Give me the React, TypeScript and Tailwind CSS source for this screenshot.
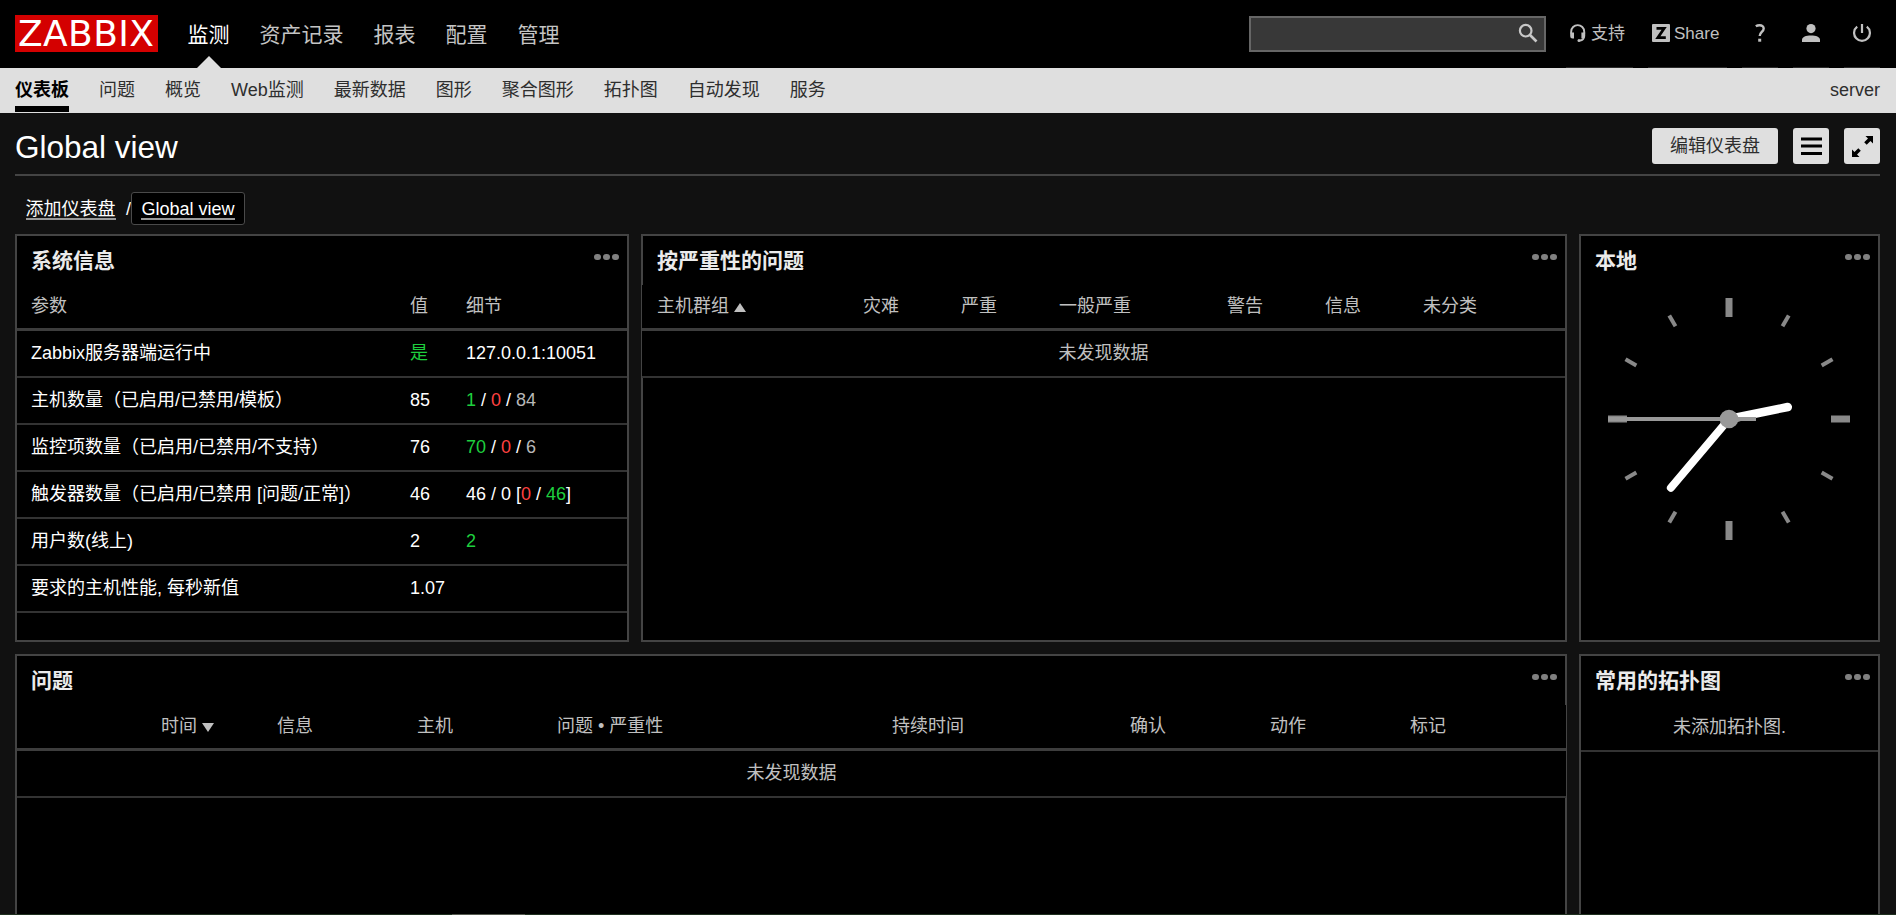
import React from "react";

const FONT = "font-['Liberation_Sans','Noto_Sans_CJK_SC',sans-serif]";

const mainMenu = ["监测", "资产记录", "报表", "配置", "管理"];
const subMenu = ["仪表板", "问题", "概览", "Web监测", "最新数据", "图形", "聚合图形", "拓扑图", "自动发现", "服务"];

const Green: React.FC<{ children: React.ReactNode }> = ({ children }) => <span className="text-[#1ecf3e]">{children}</span>;
const Red: React.FC<{ children: React.ReactNode }> = ({ children }) => <span className="text-[#ff4040]">{children}</span>;
const Grey: React.FC<{ children: React.ReactNode }> = ({ children }) => <span className="text-[#b8b8b8]">{children}</span>;

const systemRows: { name: string; value: React.ReactNode; details?: React.ReactNode }[] = [
  { name: "Zabbix服务器端运行中", value: <Green>是</Green>, details: "127.0.0.1:10051" },
  { name: "主机数量（已启用/已禁用/模板）", value: "85", details: <><Green>1</Green> / <Red>0</Red> / <Grey>84</Grey></> },
  { name: "监控项数量（已启用/已禁用/不支持）", value: "76", details: <><Green>70</Green> / <Red>0</Red> / <Grey>6</Grey></> },
  { name: "触发器数量（已启用/已禁用 [问题/正常]）", value: "46", details: <>46 / 0 [<Red>0</Red> / <Green>46</Green>]</> },
  { name: "用户数(线上)", value: "2", details: <Green>2</Green> },
  { name: "要求的主机性能, 每秒新值", value: "1.07" },
];

interface WidgetProps {
  title: string;
  className?: string;
  children: React.ReactNode;
}

const Widget: React.FC<WidgetProps> = ({ title, className = "", children }) => (
  <section className={`border-2 border-[#444] bg-black min-w-0 ${className}`}>
    <div className="flex justify-between h-[49px] pl-[14px] pr-[8.5px] pt-[9px]">
      <h4 className="text-[21px] leading-8 font-bold text-[#ebebeb]">{title}</h4>
      <button className="flex gap-[2.5px] pt-[8.5px] items-start">
        <span className="size-[6.5px] rounded-full bg-[#808080]" />
        <span className="size-[6.5px] rounded-full bg-[#808080]" />
        <span className="size-[6.5px] rounded-full bg-[#808080]" />
      </button>
    </div>
    {children}
  </section>
);

const Clock: React.FC = () => (
  <svg className="w-[242px] h-[242px] ml-[27px] mt-[13px] block" viewBox="-121 -121 242 242">
    {[...Array(12)].map((_, i) => (
      <line
        key={i}
        x1="0"
        x2="0"
        y1={i % 3 ? -119.5 : -121}
        y2={i % 3 ? -107 : -102}
        stroke="#898989"
        strokeWidth={i % 3 ? 4 : 7}
        transform={`rotate(${i * 30})`}
      />
    ))}
    <line x1="0" y1="0" x2="0" y2="-60" stroke="#fff" strokeWidth="8.5" strokeLinecap="round" transform="rotate(78.5)" />
    <line x1="0" y1="0" x2="0" y2="-90" stroke="#fff" strokeWidth="8" strokeLinecap="round" transform="rotate(220.2)" />
    <line x1="27" y1="0" x2="-121" y2="0" stroke="#999" strokeWidth="4" />
    <circle r="9.3" fill="#999" />
  </svg>
);

const App: React.FC = () => (
  <div className={`${FONT} h-[915px] overflow-hidden bg-[#111] text-white text-[18px] leading-[27px] relative`}>
    {/* Top bar */}
    <header className="h-[68px] bg-black flex items-start pl-[15px] pr-4">
      <div className="mt-[15px] w-[143px] h-[37px] bg-[#d40000] pl-[3px] text-white text-[36px] leading-[37px] tracking-[0.4px] font-['DejaVu_Sans',sans-serif]">
        ZABBIX
      </div>
      <nav className="flex ml-[14.5px] text-[21px]">
        {mainMenu.map((item, i) => (
          <a key={item} className={`relative block h-[68px] px-[15px] leading-[70px] ${i === 0 ? "text-white" : "text-[#c4c4c4]"}`}>
            {item}
            {i === 0 && (
              <span className="absolute bottom-0 left-1/2 -translate-x-1/2 border-x-[12.5px] border-x-transparent border-b-[12px] border-b-[#dfdfdf]" />
            )}
          </a>
        ))}
      </nav>
      <div className="ml-auto mt-4 w-[297px] h-9 border-2 border-[#666] bg-[#383838] flex justify-end pr-[6px] pt-[5px]">
        <svg width="20" height="20" viewBox="0 0 20 20" fill="none" stroke="#c8c8c8">
          <circle cx="7.7" cy="7.7" r="5.8" strokeWidth="2.2" />
          <path d="M12 12l6.500 6.500" strokeWidth="2.700" />
        </svg>
      </div>
      <div className="flex ml-5 gap-[15px] text-[17px] leading-5 text-[#c0c0c0]">
        <a className="h-[68px] w-[67px] border-b border-[#2c2c2c] pl-[3px] pt-6 flex">
          <svg className="mr-1" width="18" height="18" viewBox="0 0 18 18" fill="none" stroke="#c0c0c0">
            <path d="M2.200 9.500V7.600a6.500 6.500 0 0 1 13 0v1.900M14.800 13c0 2-1.300 3.100-3.800 3.500" strokeWidth="1.900" />
            <path d="M1.200 8.500h3.800v6H3.500a2.300 2.300 0 0 1-2.300-2.300zM12.400 8.500h3.800v3.700a2.300 2.300 0 0 1-2.300 2.300h-1.500z" fill="#c0c0c0" stroke="none" />
            <circle cx="10" cy="16.500" r="1.500" fill="#c0c0c0" stroke="none" />
          </svg>
          支持
        </a>
        <a className="h-[68px] w-[79px] border-b border-[#2c2c2c] pl-1 pt-6 flex">
          <svg className="mr-1" width="18" height="18" viewBox="0 0 18 18">
            <rect width="18" height="18" rx="1" fill="#c0c0c0" />
            <path d="M4.500 4.300h7.700L5.800 13.700h8" fill="none" stroke="#000" strokeWidth="2.700" />
          </svg>
          Share
        </a>
        <a className="h-[68px] w-9 border-b border-[#2c2c2c] pt-6 flex justify-center">
          <svg width="18" height="18" viewBox="0 0 18 18" fill="none" stroke="#c0c0c0" strokeWidth="2.400">
            <path d="M4.800 2.300C6 1.500 7.300 1.200 8.600 1.200c2.500 0 4.100 1.300 4.100 3.300 0 3.300-4 3.700-4 7.500" />
            <path d="M7.200 14.700h3v3h-3z" fill="#c0c0c0" stroke="none" />
          </svg>
        </a>
        <a className="h-[68px] w-9 border-b border-[#2c2c2c] pt-6 flex justify-center">
          <svg width="18" height="18" viewBox="0 0 18 18" fill="#c0c0c0">
            <circle cx="9" cy="4.600" r="4.600" />
            <path d="M0 18v-2.300c0-2.700 4-4.200 9-4.200s9 1.500 9 4.200V18z" />
          </svg>
        </a>
        <a className="h-[68px] w-9 border-b border-[#2c2c2c] pt-6 flex justify-center">
          <svg width="18" height="18" viewBox="0 0 18 18" fill="none" stroke="#c0c0c0" strokeWidth="2.200">
            <path d="M9 0v9M4.200 2.700a7.900 7.900 0 1 0 9.600 0" />
          </svg>
        </a>
      </div>
    </header>

    {/* Sub navigation */}
    <div className="h-[45px] bg-[#dfdfdf] text-[#2e2e2e] flex gap-[30px] pl-[15px] pr-4">
      {subMenu.map((item, i) => (
        <a
          key={item}
          className={`h-11 leading-[44px] ${i === 0 ? "font-bold text-black border-b-[6px] border-black" : ""}`}
        >
          {item}
        </a>
      ))}
      <span className="ml-auto leading-[44px]">server</span>
    </div>

    <main className="pl-[15px] pr-4">
      <div className="h-[63px] border-b-2 border-[#444] flex items-start pt-[15px]">
        <h1 className="text-[31.5px] leading-[38px] text-white mr-auto">Global view</h1>
        <button className="h-9 w-[126px] rounded-[3px] bg-[#dfdfdf] text-[#2e2e2e] leading-9">编辑仪表盘</button>
        <button className="ml-[15px] size-9 rounded-[3px] bg-[#dfdfdf] flex items-center justify-center">
          <svg width="21" height="19" viewBox="0 0 21 19">
            <path d="M0 .5h21v3H0zM0 7.500h21v3H0zM0 15h21v3H0z" />
          </svg>
        </button>
        <button className="ml-[15px] size-9 rounded-[3px] bg-[#dfdfdf] flex items-center justify-center">
          <svg width="21" height="21" viewBox="0 0 21 21">
            <path d="M13.500 0H21v7.500l-2.500-2.500-3.800 3.800-2.500-2.500L16 2.500zM7.500 21H0v-7.500l2.500 2.500 3.800-3.800 2.500 2.500L5 18.500z" />
          </svg>
        </button>
      </div>

      <div className="flex items-start h-[58px] pt-4 pl-[10.5px] text-white">
        <a className="mt-[3px] h-[25px] leading-[28px] border-b-2 border-[#999]">添加仪表盘</a>
        <span className="ml-[10.5px] w-[5px] mt-[3px] leading-[28px]">/</span>
        <span className="h-[33px] w-[114px] rounded-[3px] border border-[#4a4a4a] bg-black flex justify-center pt-[2px]">
          <a className="h-[25px] leading-[28px] border-b-2 border-[#999]">Global view</a>
        </span>
      </div>

      {/* Dashboard widgets */}
      <div className="grid grid-cols-[614px_minmax(0,1fr)_301px] grid-rows-[408px_408px] gap-3">
        <Widget title="系统信息">
          <div className="grid grid-cols-[379px_56px_1fr] h-[46px] border-b-[3px] border-[#3d3d3d] pl-[14px] leading-[42px] text-[#c0c0c0]">
            <span>参数</span>
            <span>值</span>
            <span>细节</span>
          </div>
          {systemRows.map((row) => (
            <div
              key={row.name}
              className="grid grid-cols-[379px_56px_1fr] h-[47px] border-b-2 border-[#333] pl-[14px] leading-[44px] whitespace-nowrap"
            >
              <span>{row.name}</span>
              <span>{row.value}</span>
              <span>{row.details}</span>
            </div>
          ))}
        </Widget>

        <Widget title="按严重性的问题">
          <div className="-ml-px bg-black text-[#c0c0c0]">
            <div className="grid grid-cols-[206px_98px_98px_168px_98px_98px_1fr] h-[46px] border-b-[3px] border-[#3d3d3d] pl-[15px] leading-[42px]">
              <span className="flex">
                主机群组
                <span className="ml-[5px] mt-[18px] h-0 border-x-[6px] border-x-transparent border-b-[9px] border-b-[#c0c0c0]" />
              </span>
              <span>灾难</span>
              <span>严重</span>
              <span>一般严重</span>
              <span>警告</span>
              <span>信息</span>
              <span>未分类</span>
            </div>
            <div className="h-[47px] border-b-2 border-[#333] leading-[44px] text-center">未发现数据</div>
          </div>
        </Widget>

        <Widget title="本地">
          <Clock />
        </Widget>

        <Widget title="问题" className="col-span-2">
          <div className="-mr-px bg-black text-[#c0c0c0]">
            <div className="grid grid-cols-[116px_140px_140px_335px_238px_140px_140px_1fr] h-[46px] border-b-[3px] border-[#3d3d3d] pl-[144px] leading-[42px]">
              <span className="flex">
                时间
                <span className="ml-[5px] mt-[18px] h-0 border-x-[6px] border-x-transparent border-t-[9px] border-t-[#c0c0c0]" />
              </span>
              <span>信息</span>
              <span>主机</span>
              <span>问题 • 严重性</span>
              <span>持续时间</span>
              <span>确认</span>
              <span>动作</span>
              <span>标记</span>
            </div>
            <div className="h-[47px] border-b-2 border-[#333] leading-[44px] text-center">未发现数据</div>
          </div>
        </Widget>

        <Widget title="常用的拓扑图">
          <div className="h-[47px] border-b-2 border-[#333] leading-[44px] text-center text-[#c0c0c0]">未添加拓扑图.</div>
        </Widget>
      </div>
    </main>

    {/* Window edge along the bottom */}
    <div className="absolute inset-x-0 bottom-0 h-px bg-[#1f301f]">
      <div className="ml-[452px] w-[73px] h-px bg-[#555a50]" />
    </div>
  </div>
);

export default App;
